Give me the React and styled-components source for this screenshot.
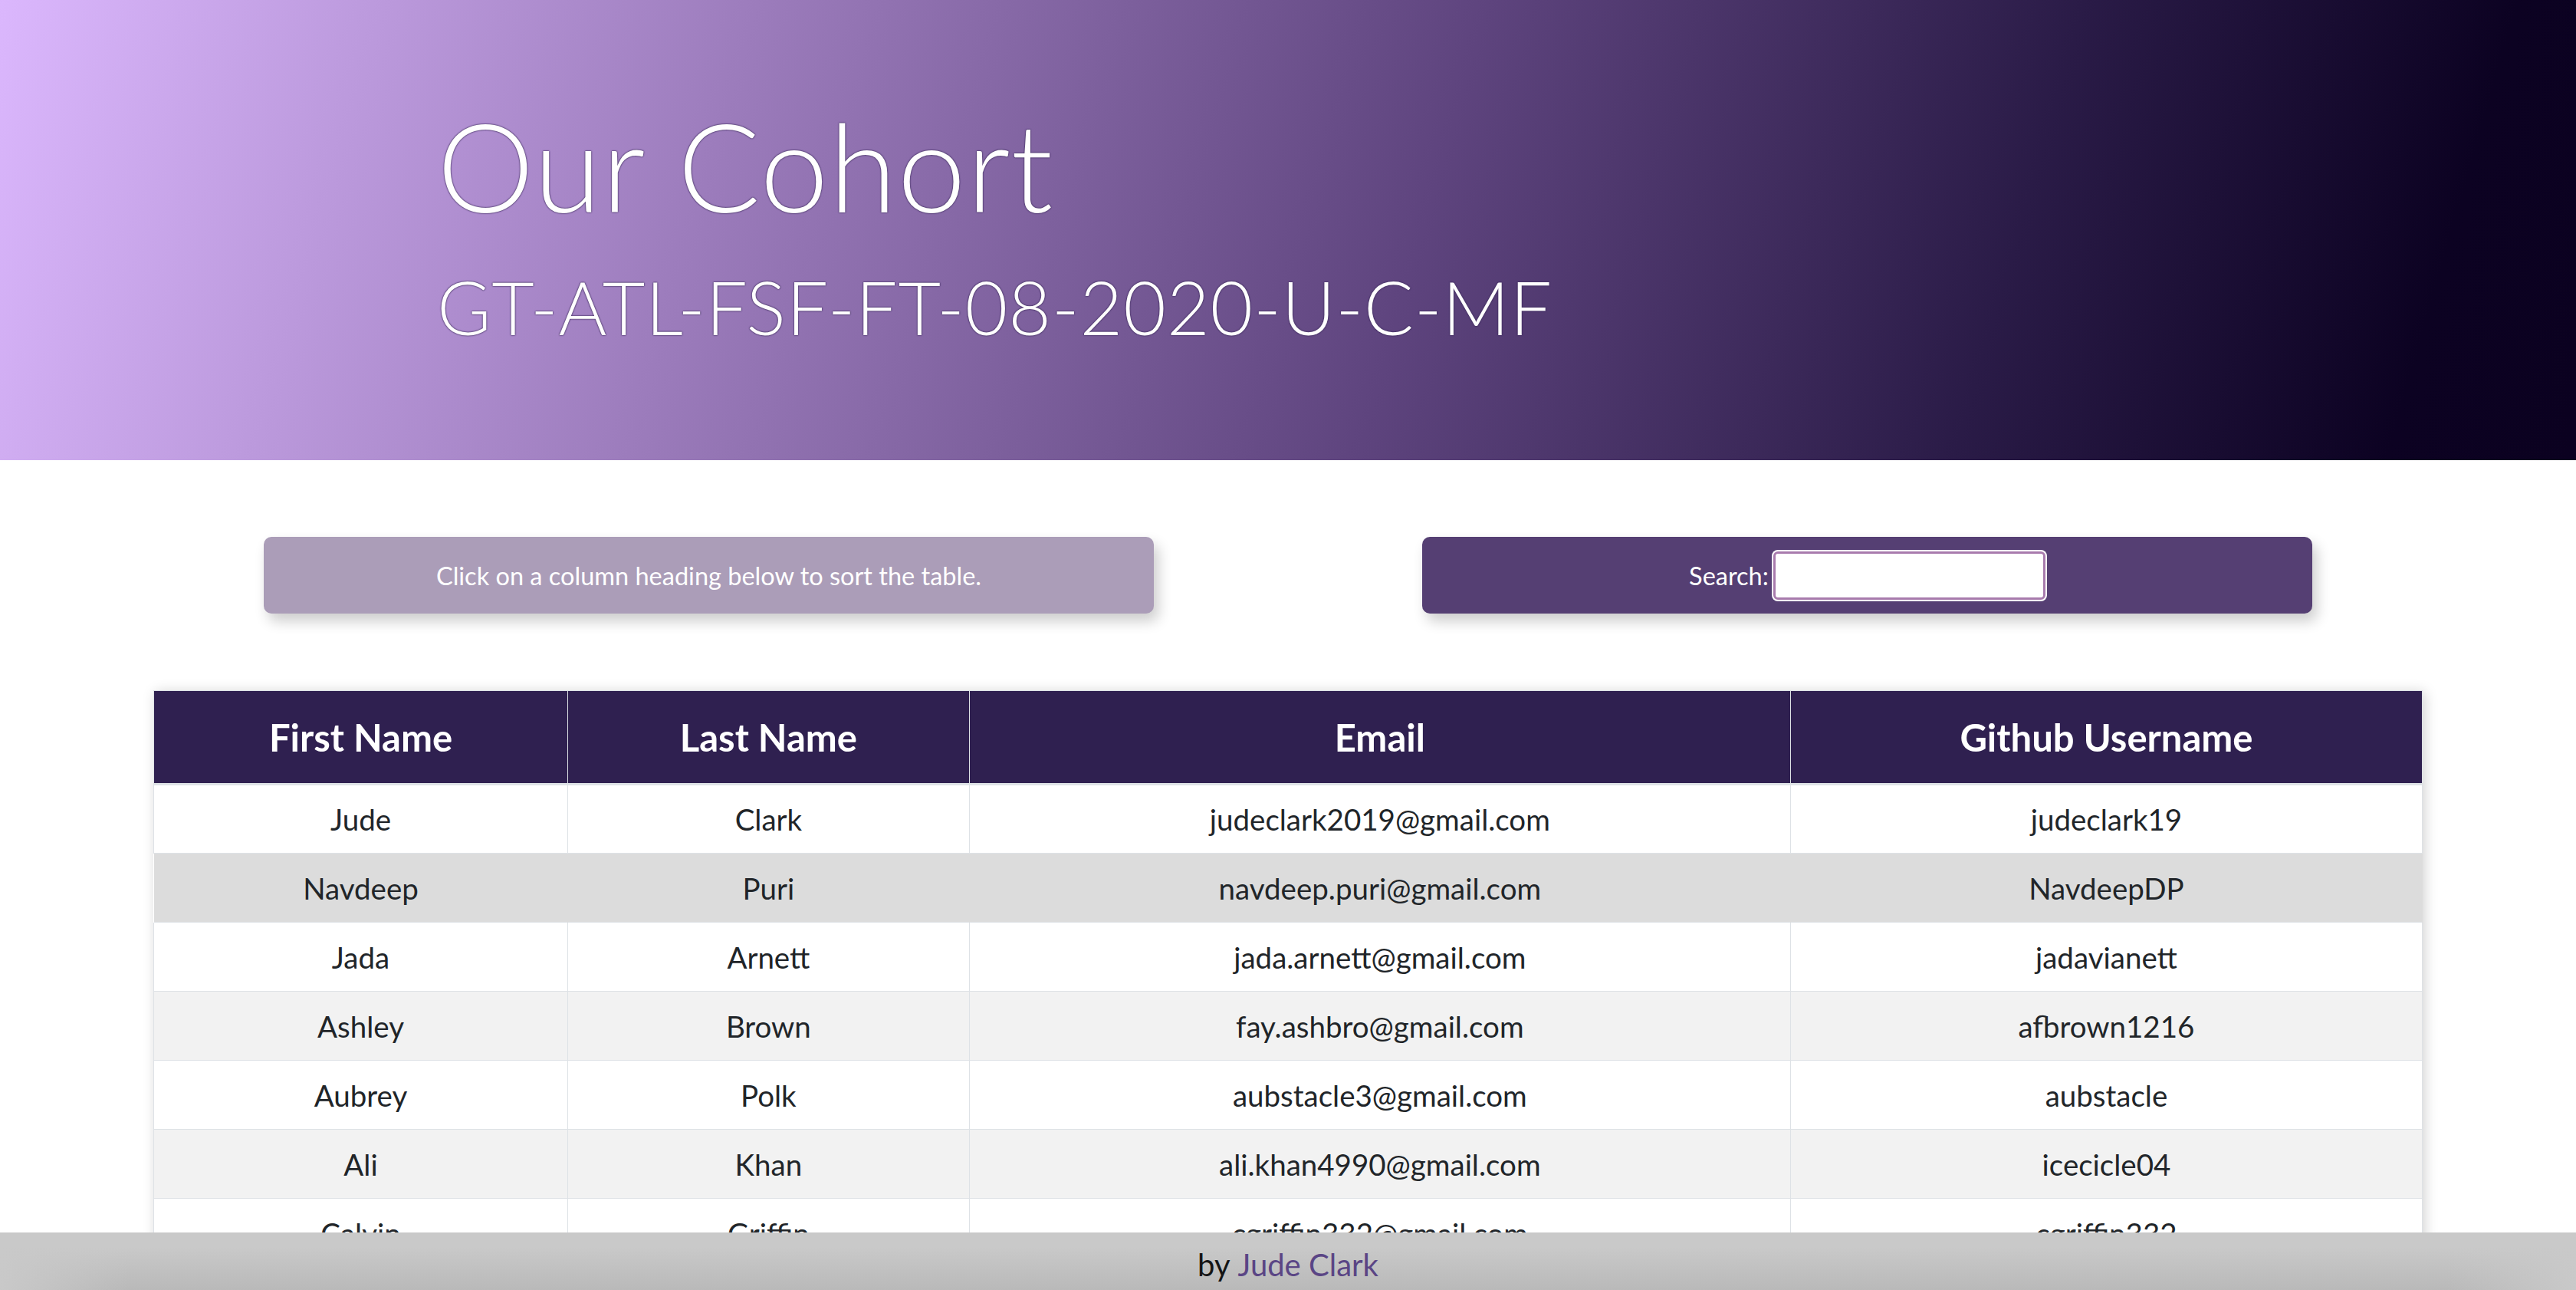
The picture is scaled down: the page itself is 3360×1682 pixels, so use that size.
import React from "react";
import styled, { createGlobalStyle } from "styled-components";

const Global = createGlobalStyle`
  html, body { margin: 0; padding: 0; }
  body {
    font-family: Lato, "Open Sans", "Noto Sans", sans-serif;
    color: #212529;
    background: #fff;
  }
  * { box-sizing: border-box; }
`;

const Hero = styled.header`
  height: 600px;
  background: linear-gradient(106deg, #dbb7fd 0%, #9c7cbc 28%, #5e447e 55%, #2a1b47 77%, #0c0222 93%, #0b0120 100%);
`;

const HeroInner = styled.div`
  width: 2220px;
  margin: 0 auto;
  padding-top: 119px;
  color: #fff;
  text-shadow: 0 0 2px #3d2b5c, 0 0 2px #3d2b5c;
`;

const Title = styled.h1`
  margin: 0;
  font-size: 160px;
  line-height: 1.2;
  font-weight: 300;
  letter-spacing: 1px;
`;

const Subtitle = styled.p`
  margin: 31px 0 0;
  font-size: 96px;
  line-height: 1.2;
  font-weight: 300;
  letter-spacing: 1px;
`;

const Controls = styled.section`
  display: flex;
  justify-content: center;
  gap: 350px;
  margin-top: 100px;
`;

const Panel = styled.div`
  width: 1161px;
  height: 100px;
  border-radius: 10px;
  background: ${(p) => p.$bg};
  box-shadow: 6px 10px 18px rgba(0, 0, 0, 0.2);
  display: flex;
  align-items: center;
  justify-content: center;
  color: #fff;
  font-size: 32.5px;
`;

const Label = styled.label`
  display: flex;
  align-items: center;
  gap: 6px;
  font-size: 32.5px;
`;

const SearchInput = styled.input`
  width: 355px;
  height: 63px;
  border: 3px solid #a87bad;
  border-radius: 6px;
  box-shadow: 0 0 0 2px #fff;
  background: #fff;
  outline: none;
  font-size: 28px;
  padding: 0 10px;
`;

const TableWrap = styled.div`
  width: 2960px;
  margin: 100px auto 0;
  box-shadow: 3px 2px 16px rgba(0, 0, 0, 0.18);
`;

const Table = styled.table`
  width: 100%;
  border-collapse: collapse;
  text-align: center;
  border: 1px solid #dee2e6;
`;

const Th = styled.th`
  width: ${(p) => p.$w};
  height: 122px;
  background: #2f2050;
  color: #fff;
  font-size: 49px;
  font-weight: 700;
  border: 1px solid #dee2e6;
  border-top: none;
  border-bottom: 3px solid #dee2e6;
  padding: 0;
`;

const Tr = styled.tr`
  background: ${(p) => (p.$hover ? "#dcdcdc" : p.$odd ? "#fff" : "#f2f2f2")};
`;

const Td = styled.td`
  height: 90px;
  font-size: 38.5px;
  color: #212529;
  border-left: 1px solid #dee2e6;
  border-right: 1px solid #dee2e6;
  border-top: 1px solid #dee2e6;
  padding: 0;
  ${(p) => (p.$hover ? "border-left-color: transparent; border-right-color: transparent;" : "")}
`;

const Footer = styled.footer`
  position: fixed;
  left: 0;
  right: 0;
  bottom: 0;
  height: 75px;
  background:
    linear-gradient(to right, #c9c9c9 0%, rgba(201,201,201,0) 5%, rgba(201,201,201,0) 95%, #c9c9c9 100%),
    linear-gradient(to bottom, #c9c9c9 25%, #b9b9b9 100%);
  display: flex;
  align-items: center;
  justify-content: center;
  padding-top: 8px;
  font-size: 40px;
  color: #151515;
`;

const Author = styled.a`
  color: #5a4585;
  text-decoration: none;
  margin-left: 10px;
`;

const columns = [
  { label: "First Name", w: "18.25%" },
  { label: "Last Name", w: "17.7%" },
  { label: "Email", w: "36.2%" },
  { label: "Github Username", w: "27.85%" },
];

const people = [
  ["Jude", "Clark", "judeclark2019@gmail.com", "judeclark19"],
  ["Navdeep", "Puri", "navdeep.puri@gmail.com", "NavdeepDP"],
  ["Jada", "Arnett", "jada.arnett@gmail.com", "jadavianett"],
  ["Ashley", "Brown", "fay.ashbro@gmail.com", "afbrown1216"],
  ["Aubrey", "Polk", "aubstacle3@gmail.com", "aubstacle"],
  ["Ali", "Khan", "ali.khan4990@gmail.com", "icecicle04"],
  ["Calvin", "Griffin", "cgriffin332@gmail.com", "cgriffin332"],
];

export default function App() {
  return (
    <>
      <Global />
      <Hero>
        <HeroInner>
          <Title>Our Cohort</Title>
          <Subtitle>GT-ATL-FSF-FT-08-2020-U-C-MF</Subtitle>
        </HeroInner>
      </Hero>
      <Controls>
        <Panel $bg="#ab9db8">Click on a column heading below to sort the table.</Panel>
        <Panel $bg="#553f73">
          <Label>
            Search:
            <SearchInput type="text" />
          </Label>
        </Panel>
      </Controls>
      <TableWrap>
        <Table>
          <thead>
            <tr>
              {columns.map((c) => (
                <Th key={c.label} $w={c.w}>{c.label}</Th>
              ))}
            </tr>
          </thead>
          <tbody>
            {people.map((p, i) => (
              <Tr key={p[2]} $odd={i % 2 === 0} $hover={i === 1}>
                {p.map((v) => (
                  <Td key={v} $hover={i === 1}>{v}</Td>
                ))}
              </Tr>
            ))}
          </tbody>
        </Table>
      </TableWrap>
      <Footer>
        by<Author href="#">Jude Clark</Author>
      </Footer>
    </>
  );
}
